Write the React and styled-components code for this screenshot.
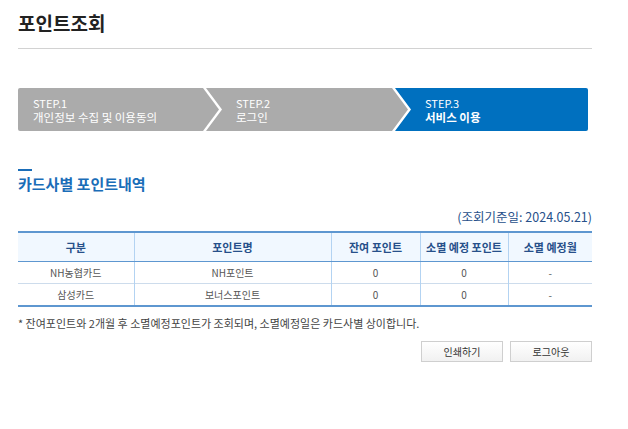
import React from "react"
import styled, { createGlobalStyle } from "styled-components"

const colors = {
  blue: "#0070bf",
  heading: "#1a6db8",
  navy: "#27508a",
  gray: "#ababab",
  line: "#5e97d0",
  colLine: "#b3d3f2",
  rowLine: "#cddcec",
  headBg: "#f1f8ff",
  text: "#555",
}

const GlobalStyle = createGlobalStyle`
  html, body {
    margin: 0;
    padding: 0;
    background: #fff;
  }
  body {
    font-family: "Noto Sans CJK KR", "Noto Sans", sans-serif;
    color: #333;
  }
`

const Page = styled.div`
  width: 574px;
  margin-left: 18px;
`

const PageHeader = styled.div`
  padding: 10px 0 12px;
  border-bottom: 1px solid #d2d2d2;

  h1 {
    margin: 0;
    font-size: 19px;
    line-height: 26px;
    font-weight: 700;
    color: #222;
  }
`

const Steps = styled.ol`
  display: flex;
  margin: 39px 0 0;
  padding: 0;
  list-style: none;
  width: 570px;
`

const Step = styled.li`
  box-sizing: border-box;
  flex: none;
  width: ${(p) => p.width}px;
  height: 43px;
  display: flex;
  flex-direction: column;
  justify-content: center;
  padding-left: ${(p) => (p.first ? "15px" : "30px")};
  margin-left: ${(p) => (p.first ? "0" : "-13px")};
  background: ${(p) => (p.active ? colors.blue : colors.gray)};
  color: #fff;
  font-size: 11px;
  line-height: 14px;
  border-radius: ${(p) => (p.first ? "2px 0 0 2px" : p.last ? "0 2px 2px 0" : "0")};
  clip-path: ${(p) =>
    p.first
      ? "polygon(0 0, calc(100% - 16px) 0, 100% 50%, calc(100% - 16px) 100%, 0 100%)"
      : p.last
      ? "polygon(0 0, 100% 0, 100% 100%, 0 100%, 16px 50%)"
      : "polygon(0 0, calc(100% - 16px) 0, 100% 50%, calc(100% - 16px) 100%, 0 100%, 16px 50%)"};

  span {
    display: block;
  }
  strong {
    display: block;
    font-size: 11.5px;
    font-weight: ${(p) => (p.active ? 700 : 400)};
  }
`

const SectionTitle = styled.h2`
  margin: 38px 0 0;
  font-size: 15px;
  line-height: 20px;
  font-weight: 700;
  color: ${colors.heading};

  &:before {
    content: "";
    display: block;
    width: 14px;
    height: 2px;
    margin-bottom: 3px;
    background: ${colors.heading};
  }
`

const BaseDate = styled.p`
  margin: 15px 0 0;
  text-align: right;
  font-size: 12.5px;
  line-height: 16px;
  color: ${colors.navy};
`

const Table = styled.table`
  width: 100%;
  margin-top: 6px;
  border-collapse: collapse;
  table-layout: fixed;
  border-top: 2px solid ${colors.line};
  border-bottom: 2px solid ${colors.line};

  th {
    height: 28px;
    background: ${colors.headBg};
    color: ${colors.navy};
    font-size: 11px;
    font-weight: 700;
    border-bottom: 1px solid ${colors.line};
  }
  td {
    height: 21px;
    font-size: 10px;
    color: ${colors.text};
    text-align: center;
  }
  tr + tr td {
    border-top: 1px solid ${colors.rowLine};
  }
  th + th,
  td + td {
    border-left: 1px solid ${colors.colLine};
  }
  th,
  td {
    padding: 0;
    line-height: 14px;
  }
`

const Note = styled.p`
  margin: 8px 0 0;
  font-size: 11px;
  line-height: 16px;
  color: #444;
`

const ButtonRow = styled.div`
  display: flex;
  justify-content: flex-end;
  gap: 7px;
  margin-top: 10px;
`

const Button = styled.button`
  width: 82px;
  height: 21px;
  padding: 0;
  border: 1px solid #cfcfcf;
  background: linear-gradient(#ffffff, #f1f1f1);
  font-family: inherit;
  font-size: 10px;
  color: #333;
  cursor: pointer;
`

const steps = [
  { no: "STEP.1", label: "개인정보 수집 및 이용동의", width: 201 },
  { no: "STEP.2", label: "로그인", width: 202 },
  { no: "STEP.3", label: "서비스 이용", width: 193, active: true },
]

const rows = [
  { card: "NH농협카드", name: "NH포인트", remain: "0", expire: "0", month: "-" },
  { card: "삼성카드", name: "보너스포인트", remain: "0", expire: "0", month: "-" },
]

const App = () => {
  return (
    <>
      <GlobalStyle />
      <Page>
        <PageHeader>
          <h1>포인트조회</h1>
        </PageHeader>

        <Steps>
          {steps.map((s, i) => (
            <Step
              key={s.no}
              width={s.width}
              first={i === 0}
              last={i === steps.length - 1}
              active={s.active}
            >
              <span>{s.no}</span>
              <strong>{s.label}</strong>
            </Step>
          ))}
        </Steps>

        <SectionTitle>카드사별 포인트내역</SectionTitle>
        <BaseDate>(조회기준일: 2024.05.21)</BaseDate>

        <Table>
          <colgroup>
            <col style={{ width: 116 }} />
            <col style={{ width: 197 }} />
            <col style={{ width: 89 }} />
            <col style={{ width: 88 }} />
            <col />
          </colgroup>
          <thead>
            <tr>
              <th>구분</th>
              <th>포인트명</th>
              <th>잔여 포인트</th>
              <th>소멸 예정 포인트</th>
              <th>소멸 예정월</th>
            </tr>
          </thead>
          <tbody>
            {rows.map((r) => (
              <tr key={r.card}>
                <td>{r.card}</td>
                <td>{r.name}</td>
                <td>{r.remain}</td>
                <td>{r.expire}</td>
                <td>{r.month}</td>
              </tr>
            ))}
          </tbody>
        </Table>

        <Note>* 잔여포인트와 2개월 후 소멸예정포인트가 조회되며, 소멸예정일은 카드사별 상이합니다.</Note>

        <ButtonRow>
          <Button type="button">인쇄하기</Button>
          <Button type="button">로그아웃</Button>
        </ButtonRow>
      </Page>
    </>
  )
}

export default App
